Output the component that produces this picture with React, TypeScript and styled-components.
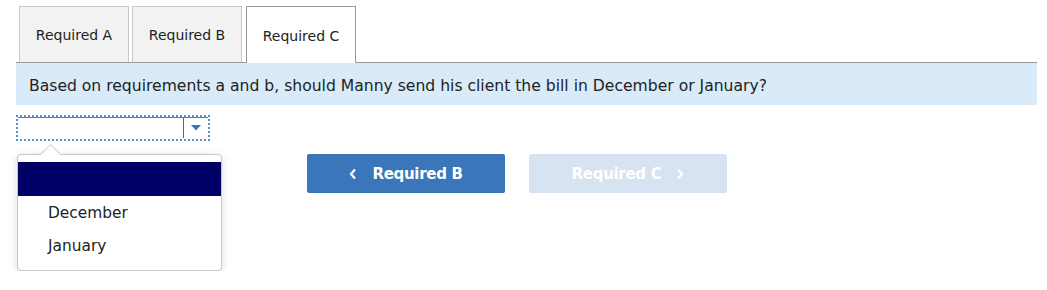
import React from 'react';
import styled, { createGlobalStyle } from 'styled-components';

const GlobalStyle = createGlobalStyle`
  body {
    margin: 0;
    background: #ffffff;
    font-family: "DejaVu Sans", Verdana, sans-serif;
    color: #222;
  }
`;

const Page = styled.div`
  padding: 6px 10px 0 16px;
  width: 1021px;
`;

const TabBar = styled.div`
  display: flex;
  gap: 3px;
  padding-left: 3px;
  border-bottom: 1px solid #9a9a9a;
  height: 56px;
  align-items: stretch;
`;

const Tab = styled.div<{ $active?: boolean }>`
  width: 108px;
  display: flex;
  align-items: center;
  justify-content: center;
  padding-top: 1px;
  font-size: 14px;
  color: #222;
  border: 1px solid ${(p) => (p.$active ? '#9a9a9a' : '#c9c9c9')};
  border-bottom: none;
  background: ${(p) => (p.$active ? '#ffffff' : '#f2f2f2')};
  margin-bottom: ${(p) => (p.$active ? '-1px' : '0')};
  ${(p) => (p.$active ? 'margin-left: 1px;' : '')}
`;

const Question = styled.div`
  background: #d9ebf9;
  height: 42px;
  display: flex;
  align-items: center;
  padding: 3px 0 0 13px;
  box-sizing: border-box;
  font-size: 15.6px;
  color: #222;
`;

const Body = styled.div`
  display: flex;
  margin-top: 10px;
`;

const SelectColumn = styled.div`
  width: 206px;
  display: flex;
  flex-direction: column;
`;

const SelectBox = styled.div`
  width: 194px;
  height: 26px;
  box-sizing: border-box;
  border: 2px dotted #5b8fcc;
  box-shadow: inset 0 1px 0 #777;
  display: flex;
  justify-content: flex-end;
`;

const ArrowCell = styled.div`
  width: 24px;
  border-left: 1px solid #3a6fa8;
  margin: 1px 0 1px;
  display: flex;
  align-items: center;
  justify-content: center;
`;

const Popup = styled.div`
  position: relative;
  margin-top: 13px;
  margin-left: 1px;
  width: 203px;
  background: #fff;
  border: 1px solid #c8c8c8;
  border-radius: 4px;
  box-shadow: 0 2px 8px rgba(0, 0, 0, 0.15);
  padding: 7px 0 8px;
  &::before {
    content: '';
    position: absolute;
    top: -8px;
    left: 25px;
    width: 14px;
    height: 14px;
    background: #fff;
    border-left: 1px solid #d0d0d0;
    border-top: 1px solid #d0d0d0;
    transform: rotate(45deg);
  }
`;

const Option = styled.div<{ $selected?: boolean }>`
  position: relative;
  height: ${(p) => (p.$selected ? '34px' : '33px')};
  display: flex;
  align-items: center;
  padding-left: 30px;
  font-size: 15.4px;
  color: #222;
  background: ${(p) => (p.$selected ? '#000066' : 'transparent')};
`;

const NavRow = styled.div`
  display: flex;
  gap: 24px;
  margin-left: 85px;
  margin-top: 39px;
  align-items: flex-start;
`;

const NavButton = styled.div<{ $disabled?: boolean }>`
  width: 198px;
  height: 39px;
  border-radius: 2px;
  background: ${(p) => (p.$disabled ? '#d7e3f0' : '#3a76b9')};
  color: #ffffff;
  display: flex;
  align-items: center;
  justify-content: center;
  gap: 15px;
  font-family: "DejaVu Sans", Tahoma, sans-serif;
  font-weight: bold;
  font-size: 15px;
  letter-spacing: -0.3px;
`;

const Chevron = ({ dir }: { dir: 'left' | 'right' }) => (
  <svg width="8" height="12" viewBox="0 0 8 12">
    <path
      d={dir === 'left' ? 'M6 1.5 L2 6 L6 10.5' : 'M2 1.5 L6 6 L2 10.5'}
      fill="none"
      stroke="#fff"
      strokeWidth="2.2"
    />
  </svg>
);

export default function App() {
  return (
    <>
      <GlobalStyle />
      <Page>
        <TabBar>
          <Tab>Required A</Tab>
          <Tab>Required B</Tab>
          <Tab $active>Required C</Tab>
        </TabBar>
        <Question>
          Based on requirements a and b, should Manny send his client the bill in December or January?
        </Question>
        <Body>
          <SelectColumn>
            <SelectBox>
              <ArrowCell>
                <svg width="12" height="8" viewBox="0 0 12 8">
                  <path d="M1 1 H11 L6 6.5 Z" fill="#3a76b9" />
                </svg>
              </ArrowCell>
            </SelectBox>
            <Popup>
              <Option $selected />
              <Option>December</Option>
              <Option>January</Option>
            </Popup>
          </SelectColumn>
          <NavRow>
            <NavButton>
              <Chevron dir="left" />
              Required B
            </NavButton>
            <NavButton $disabled>
              Required C
              <Chevron dir="right" />
            </NavButton>
          </NavRow>
        </Body>
      </Page>
    </>
  );
}
